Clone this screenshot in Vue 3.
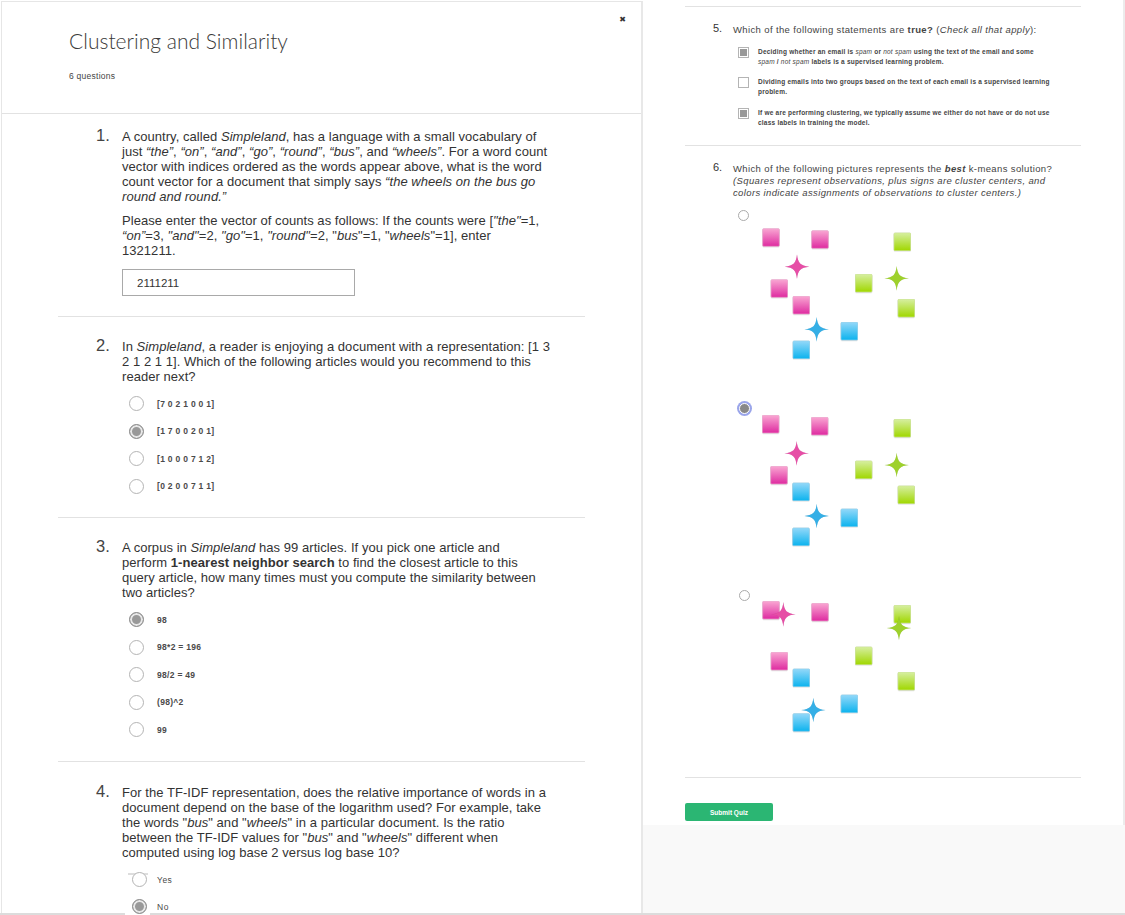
<script setup>
import { ref } from 'vue'

const answer = ref('2111211')

const q2Options = [
  { label: '[7 0 2 1 0 0 1]', on: false },
  { label: '[1 7 0 0 2 0 1]', on: true },
  { label: '[1 0 0 0 7 1 2]', on: false },
  { label: '[0 2 0 0 7 1 1]', on: false }
]

const q3Options = [
  { label: '98', on: true },
  { label: '98*2 = 196', on: false },
  { label: '98/2 = 49', on: false },
  { label: '(98)^2', on: false },
  { label: '99', on: false }
]

// marker positions are in 3x pixels of a 200x170 picture
const pictures = [
  {
    radio: 'first',
    squares: [
      ['pink', 98, 71], ['pink', 245, 77], ['pink', 123, 224], ['pink', 189, 274],
      ['blue', 333, 352], ['blue', 189, 408],
      ['green', 492, 84], ['green', 376, 208], ['green', 504, 283]
    ],
    stars: [['pink', 201, 185], ['blue', 260, 373], ['green', 500, 220]]
  },
  {
    radio: 'second',
    squares: [
      ['pink', 97, 61], ['pink', 244, 67], ['pink', 122, 214],
      ['blue', 188, 264], ['blue', 333, 342], ['blue', 188, 399],
      ['green', 492, 73], ['green', 376, 198], ['green', 504, 273]
    ],
    stars: [['pink', 200, 175], ['blue', 260, 363], ['green', 500, 210]]
  },
  {
    radio: 'third',
    squares: [
      ['pink', 98, 49], ['pink', 245, 55], ['pink', 123, 202],
      ['blue', 189, 252], ['blue', 333, 330], ['blue', 189, 386],
      ['green', 492, 61], ['green', 376, 186], ['green', 504, 262]
    ],
    stars: [['pink', 160, 88], ['blue', 250, 375], ['green', 507, 129]]
  }
]

const starColor = { pink: '#e64ea6', blue: '#35afe6', green: '#9ed12c' }
const starPath = 'M0 -37 C3 -10 10 -3 37 0 C10 3 3 10 0 37 C-3 10 -10 3 -37 0 C-10 -3 -3 -10 0 -37 Z'
</script>

<template>
  <div class="page">
    <div class="columns">
      <section class="left">
        <header class="head">
          <h1>Clustering and Similarity</h1>
          <p class="count">6 questions</p>
          <span class="close">✖</span>
        </header>

        <div class="question q1">
          <span class="num">1.</span>
          <div class="body">
            <p>A country, called <i>Simpleland</i>, has a language with a small vocabulary of just <i>“the”</i>, <i>“on”</i>, <i>“and”</i>, <i>“go”</i>, <i>“round”</i>, <i>“bus”</i>, and <i>“wheels”</i>. For a word count vector with indices ordered as the words appear above, what is the word count vector for a document that simply says <i>“the wheels on the bus go round and round.”</i></p>
            <p class="second">Please enter the vector of counts as follows: If the counts were [<i>"the"</i>=1, <i>“on”</i>=3, <i>"and"</i>=2, <i>"go"</i>=1, <i>"round"</i>=2, "<i>bus</i>"=1, "<i>wheels</i>"=1], enter<br />1321211.</p>
            <input v-model="answer" class="answer" type="text" />
          </div>
        </div>

        <div class="question q2">
          <span class="num">2.</span>
          <div class="body">
            <p>In <i>Simpleland</i>, a reader is enjoying a document with a representation: [1 3 2 1 2 1 1]. Which of the following articles would you recommend to this reader next?</p>
            <div class="options">
              <div v-for="o in q2Options" :key="o.label" class="option">
                <span class="radio" :class="{ on: o.on }"></span>
                <span>{{ o.label }}</span>
              </div>
            </div>
          </div>
        </div>

        <div class="question q3">
          <span class="num">3.</span>
          <div class="body">
            <p>A corpus in <i>Simpleland</i> has 99 articles. If you pick one article and<br />perform <b>1-nearest neighbor search</b> to find the closest article to this<br />query article, how many times must you compute the similarity between two articles?</p>
            <div class="options">
              <div v-for="o in q3Options" :key="o.label" class="option">
                <span class="radio" :class="{ on: o.on }"></span>
                <span>{{ o.label }}</span>
              </div>
            </div>
          </div>
        </div>

        <div class="question q4">
          <span class="num">4.</span>
          <div class="body">
            <p>For the TF-IDF representation, does the relative importance of words in a document depend on the base of the logarithm used? For example, take the words "<i>bus</i>" and "<i>wheels</i>" in a particular document. Is the ratio between the TF-IDF values for "<i>bus</i>" and "<i>wheels</i>" different when computed using log base 2 versus log base 10?</p>
            <div class="options shifted">
              <div class="option">
                <span class="glitch"></span>
                <span class="radio"></span>
                <span class="thin">Yes</span>
              </div>
              <div class="option">
                <span class="mask"></span>
                <span class="radio on"></span>
                <span class="thin">No</span>
              </div>
            </div>
          </div>
        </div>
      </section>

      <section class="right">
        <div class="sheet">
          <div class="rq q5">
            <span class="rnum">5.</span>
            <div class="rbody">
              <p class="rtext">Which of the following statements are <b>true?</b> (<i>Check all that apply</i>):</p>
              <div class="checks">
                <div class="check-row">
                  <span class="check on"></span>
                  <span>Deciding whether an email is <i>spam</i> or <i>not spam</i> using the text of the email and some <i>spam</i> / <i>not spam</i> labels is a supervised learning problem.</span>
                </div>
                <div class="check-row">
                  <span class="check"></span>
                  <span>Dividing emails into two groups based on the text of each email is a supervised learning problem.</span>
                </div>
                <div class="check-row">
                  <span class="check on"></span>
                  <span>If we are performing clustering, we typically assume we either do not have or do not use class labels in training the model.</span>
                </div>
              </div>
            </div>
          </div>

          <div class="rq q6">
            <span class="rnum">6.</span>
            <div class="rbody">
              <p class="rtext">Which of the following pictures represents the <b><i>best</i></b> k-means solution? <i>(Squares represent observations, plus signs are cluster centers, and colors indicate assignments of observations to cluster centers.)</i></p>
            </div>
          </div>

          <div class="pictures">
            <div v-for="p in pictures" :key="p.radio" class="picture">
              <span class="pic-radio" :class="p.radio"></span>
              <svg width="200" height="170" viewBox="0 0 600 510">
                <defs>
                  <linearGradient id="pink" x1="0" y1="0" x2="0" y2="1">
                    <stop offset="0" stop-color="#f9a6d2" />
                    <stop offset="1" stop-color="#de2ba0" />
                  </linearGradient>
                  <linearGradient id="blue" x1="0" y1="0" x2="0" y2="1">
                    <stop offset="0" stop-color="#93d8f9" />
                    <stop offset="1" stop-color="#0cb3ee" />
                  </linearGradient>
                  <linearGradient id="green" x1="0" y1="0" x2="0" y2="1">
                    <stop offset="0" stop-color="#d6efa0" />
                    <stop offset="1" stop-color="#a0d700" />
                  </linearGradient>
                </defs>
                <rect
                  v-for="(s, i) in p.squares"
                  :key="i"
                  class="square"
                  :class="s[0]"
                  :x="s[1]"
                  :y="s[2]"
                  :fill="`url(#${s[0]})`"
                  width="50"
                  height="53"
                  rx="3"
                />
                <path
                  v-for="(s, i) in p.stars"
                  :key="i"
                  class="star"
                  :d="starPath"
                  :fill="starColor[s[0]]"
                  :transform="`translate(${s[1]} ${s[2]})`"
                />
              </svg>
            </div>
          </div>

          <div class="submit-wrap">
            <button class="submit" type="button">Submit Quiz</button>
          </div>
        </div>
        <div class="rest"></div>
      </section>
    </div>
    <div class="bottom-bar"></div>
  </div>
</template>

<style scoped>
.page {
  position: relative;
  width: 1125px;
  height: 915px;
  overflow: hidden;
  background: #fff;
  font-family: "Liberation Sans", Arial, sans-serif;
  color: #333;
}

.columns {
  display: flex;
  height: 913px;
}

.left {
  width: 642px;
  flex: none;
  box-sizing: border-box;
  margin-top: 1px;
  border-top: 1px solid #e6e6e6;
  border-left: 1px solid #e6e6e6;
  border-right: 2px solid #e8e8e8;
  margin-left: 1px;
}

.head {
  position: relative;
  height: 112px;
  box-sizing: border-box;
  padding: 26px 0 0 67px;
  border-bottom: 1px solid #e2e2e2;
}

h1 {
  margin: 0;
  font-family: Lato, sans-serif;
  font-weight: 300;
  font-size: 21px;
  line-height: 26px;
  letter-spacing: 0.02px;
  color: #3a3a3a;
}

.count {
  margin: 16px 0 0;
  font-size: 8.5px;
  line-height: 12px;
  color: #444;
  letter-spacing: 0.25px;
}

.close {
  position: absolute;
  top: 13px;
  right: 15px;
  font-family: "DejaVu Sans", sans-serif;
  font-size: 8px;
  line-height: 10px;
  color: #333;
}

.question {
  display: flex;
  margin: 0 56px 0 56px;
  padding-left: 38px;
  box-sizing: border-box;
  border-bottom: 1px solid #e2e2e2;
}

.q1 { height: 203px; padding-top: 15px; }
.q2 { height: 201px; padding-top: 22px; }
.q3 { height: 244px; padding-top: 22px; }
.q4 { padding-top: 23px; border-bottom: 0; }

.num {
  width: 26px;
  flex: none;
  font-size: 16.5px;
  line-height: 20px;
  margin-top: -4px;
  color: #444;
}

.body {
  width: 432px;
  flex: none;
}

.body p {
  margin: 0;
  font-size: 13px;
  line-height: 15px;
  letter-spacing: 0.05px;
  color: #333;
}

.body p.second {
  margin-top: 9px;
}

.answer {
  display: block;
  box-sizing: border-box;
  width: 233px;
  height: 27px;
  margin-top: 11px;
  padding: 0 14px;
  border: 1px solid #a9a9a9;
  background: #fff;
  font-family: "Liberation Sans", Arial, sans-serif;
  font-size: 11.5px;
  color: #333;
  outline: none;
}

.options {
  margin-top: 6px;
}

.option {
  position: relative;
  display: flex;
  align-items: center;
  height: 27.5px;
  padding-left: 7px;
  font-size: 8.5px;
  font-weight: bold;
  letter-spacing: 0.3px;
  color: #4a4a4a;
}

.radio {
  width: 15px;
  height: 15px;
  flex: none;
  box-sizing: border-box;
  margin-right: 13px;
  border: 1px solid #b4b4b4;
  border-radius: 50%;
  background: #fff;
}

.radio.on {
  border: 1px solid #8e8e8e;
  background: #999;
  box-shadow: inset 0 0 0 2px #e8e8e8;
}

.options.shifted {
  margin-top: 6px;
}

.shifted .option {
  height: 27px;
}

.shifted .radio {
  margin-left: 3px;
  margin-right: 10px;
}

.thin {
  font-weight: normal;
  letter-spacing: 0.5px;
}

.glitch {
  position: absolute;
  top: 7px;
  left: 6px;
  width: 20px;
  height: 2px;
  background: #ddd;
}

.mask {
  position: absolute;
  top: 16px;
  left: 3px;
  width: 25px;
  height: 20px;
  background: #fff;
  z-index: 2;
}

.option .radio,
.option .thin {
  position: relative;
  z-index: 3;
}

.right {
  flex: 1;
  display: flex;
  flex-direction: column;
  min-width: 0;
}

.sheet {
  height: 825px;
  flex: none;
  box-sizing: border-box;
  padding-top: 6px;
  border-right: 2px solid #ececec;
}

.rq {
  display: flex;
  margin: 0 42px 0 42px;
  padding-left: 28px;
  border-top: 1px solid #e2e2e2;
}

.q5 { height: 139px; padding-top: 17px; box-sizing: border-box; }
.q6 { height: 60px; padding-top: 17px; box-sizing: border-box; }

.rnum {
  width: 20px;
  flex: none;
  font-size: 11px;
  line-height: 12px;
  margin-top: -2px;
}

.rbody {
  width: 330px;
  flex: none;
}

.rtext {
  margin: 0;
  font-size: 9.5px;
  line-height: 12px;
  letter-spacing: 0.37px;
  color: #444;
}

.checks {
  margin-top: 11px;
  width: 318px;
}

.check-row {
  display: flex;
  min-height: 30px;
  font-size: 6.5px;
  line-height: 10px;
  font-weight: bold;
  color: #444;
  letter-spacing: 0.22px;
}

.check-row:nth-child(2) {
  min-height: 31px;
}

.check-row i {
  font-weight: normal;
}

.check {
  width: 11px;
  height: 11px;
  flex: none;
  box-sizing: border-box;
  margin: 0 9px 0 5px;
  border: 1px solid #b4b4b4;
  background: #fff;
}

.check.on {
  background: #999;
  box-shadow: inset 0 0 0 1px #fff;
}

.pictures {
  margin-left: 87px;
}

.picture {
  position: relative;
  height: 190px;
}

.picture svg {
  display: block;
}

.square {
  filter: drop-shadow(0 1px 1px rgba(0, 0, 0, 0.25));
  stroke-width: 2;
}

.square.pink { stroke: #f3a8d2; }
.square.blue { stroke: #8ed3f2; }
.square.green { stroke: #cfe88f; }

.star {
  filter: drop-shadow(0 0 1px rgba(0, 0, 0, 0.15));
}

.pic-radio {
  position: absolute;
  box-sizing: border-box;
  width: 11px;
  height: 11px;
  border: 1px solid #aaa;
  border-radius: 50%;
  background: #fff;
}

.pic-radio.first { left: 8px; top: 5px; }
.pic-radio.third { left: 9px; top: 5px; }

.pic-radio.second {
  left: 9px;
  top: 8px;
  border: 1px solid #fff;
  background: #888;
  box-shadow: 0 0 0 2px #9aa5ea;
}

.submit-wrap {
  margin: 2px 42px 0 42px;
  padding-top: 25px;
  border-top: 1px solid #e2e2e2;
}

.submit {
  display: block;
  width: 88px;
  height: 18px;
  padding: 0;
  border: 0;
  border-radius: 2px;
  background: #2bb673;
  color: #fff;
  font-family: "Liberation Sans", Arial, sans-serif;
  font-size: 6.5px;
  font-weight: bold;
}

.rest {
  flex: 1;
  background: #f9f9f9;
}

.bottom-bar {
  height: 2px;
  background: #dcdcdc;
}
</style>

<style>
html, body {
  margin: 0;
  background: #fff;
}
</style>
